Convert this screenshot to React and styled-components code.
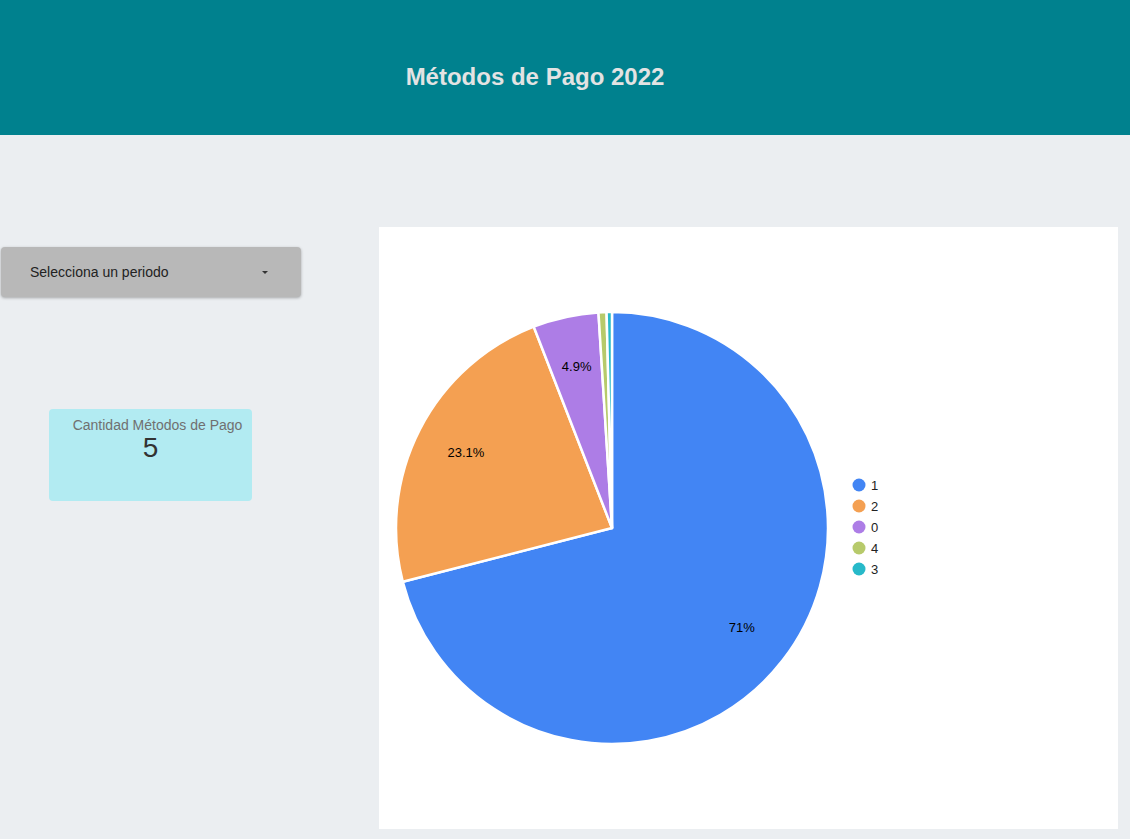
import React from 'react';
import styled, { createGlobalStyle } from 'styled-components';

const GlobalStyle = createGlobalStyle`
  html, body {
    margin: 0;
    padding: 0;
    background-color: #ebeef1;
    font-family: Arial, "Liberation Sans", sans-serif;
  }
`;

const slices = [
  { label: '1', value: 71, color: '#4285f4', showLabel: true },
  { label: '2', value: 23.1, color: '#f4a052', showLabel: true },
  { label: '0', value: 4.9, color: '#ad7de6', showLabel: true },
  { label: '4', value: 0.6, color: '#b7ca6b', showLabel: false },
  { label: '3', value: 0.4, color: '#27b9c9', showLabel: false },
];

const CX = 233;
const CY = 301;
const R = 216;

// angle in degrees, clockwise from 12 o'clock
const point = (deg, r) => {
  const rad = (deg * Math.PI) / 180;
  return [CX + r * Math.sin(rad), CY - r * Math.cos(rad)];
};

const slicePath = (start, end) => {
  const [x1, y1] = point(start, R);
  const [x2, y2] = point(end, R);
  const large = end - start > 180 ? 1 : 0;
  return `M ${CX} ${CY} L ${x1} ${y1} A ${R} ${R} 0 ${large} 1 ${x2} ${y2} Z`;
};

const PieChart = () => {
  const total = slices.reduce((s, d) => s + d.value, 0);
  let acc = 0;
  const parts = slices.map((d) => {
    const start = (acc / total) * 360;
    acc += d.value;
    const end = (acc / total) * 360;
    return { ...d, start, end };
  });

  return (
    <svg width="739" height="602" viewBox="0 0 739 602">
      {parts.map((p) => (
        <path
          key={p.label}
          d={slicePath(p.start, p.end)}
          fill={p.color}
          stroke="#ffffff"
          strokeWidth="2.5"
          strokeLinejoin="round"
        />
      ))}
      {parts
        .filter((p) => p.showLabel)
        .map((p) => {
          const [x, y] = point((p.start + p.end) / 2, R * 0.76);
          return (
            <text
              key={p.label}
              x={x}
              y={y - 1}
              textAnchor="middle"
              dominantBaseline="central"
              fontSize="13"
              fontFamily="Arial, 'Liberation Sans', sans-serif"
              fill="#000000"
            >
              {p.value}%
            </text>
          );
        })}
      {parts.map((p, i) => (
        <g key={p.label}>
          <circle cx="480" cy={258 + i * 21} r="6.5" fill={p.color} />
          <text
            x="492"
            y={258 + i * 21}
            dominantBaseline="central"
            fontSize="13"
            fontFamily="Arial, 'Liberation Sans', sans-serif"
            fill="#222222"
          >
            {p.label}
          </text>
        </g>
      ))}
    </svg>
  );
};

const App = () => {
  return (
    <>
      <GlobalStyle />
      <Page>
        <Header>
          <Title>Métodos de Pago 2022</Title>
        </Header>
        <Main>
          <Sidebar>
            <Dropdown>
              <span>Selecciona un periodo</span>
              <Caret />
            </Dropdown>
            <KpiCard>
              <KpiLabel>Cantidad Métodos de Pago</KpiLabel>
              <KpiValue>5</KpiValue>
            </KpiCard>
          </Sidebar>
          <ChartPanel>
            <PieChart />
          </ChartPanel>
        </Main>
      </Page>
    </>
  );
};

export default App;

const Page = styled.div`
  width: 1130px;
  min-height: 839px;
  background-color: #ebeef1;
`;

const Header = styled.header`
  height: 135px;
  background-color: #00818e;
  display: flex;
  align-items: center;
  justify-content: center;
  padding-right: 60px;
  padding-top: 18px;
  box-sizing: border-box;
`;

const Title = styled.h1`
  margin: 0;
  font-size: 24px;
  font-weight: 700;
  color: #e3e3e3;
`;

const Main = styled.main`
  display: flex;
  align-items: flex-start;
  gap: 78px;
  padding: 92px 12px 10px 0;
`;

const Sidebar = styled.div`
  width: 301px;
  display: flex;
  flex-direction: column;
  padding-top: 20px;
`;

const Dropdown = styled.div`
  margin-left: 1px;
  height: 50px;
  box-sizing: border-box;
  display: flex;
  align-items: center;
  justify-content: space-between;
  padding: 0 33px 0 29px;
  background-color: #b8b8b8;
  border-radius: 4px;
  box-shadow: 0 1px 3px rgba(0, 0, 0, 0.3);
  font-size: 14px;
  color: #222222;
`;

const Caret = styled.span`
  width: 0;
  height: 0;
  border-left: 3.5px solid transparent;
  border-right: 3.5px solid transparent;
  border-top: 3.5px solid #333333;
`;

const KpiCard = styled.div`
  margin: 112px 0 0 49px;
  width: 203px;
  height: 92px;
  box-sizing: border-box;
  background-color: #b2ebf2;
  border-radius: 4px;
  display: flex;
  flex-direction: column;
  align-items: center;
  padding-top: 8px;
`;

const KpiLabel = styled.div`
  font-size: 14px;
  color: #707070;
  padding-left: 14px;
`;

const KpiValue = styled.div`
  font-size: 28px;
  color: #333333;
  line-height: 30px;
`;

const ChartPanel = styled.div`
  width: 739px;
  height: 602px;
  background-color: #ffffff;
  flex-shrink: 0;
`;
